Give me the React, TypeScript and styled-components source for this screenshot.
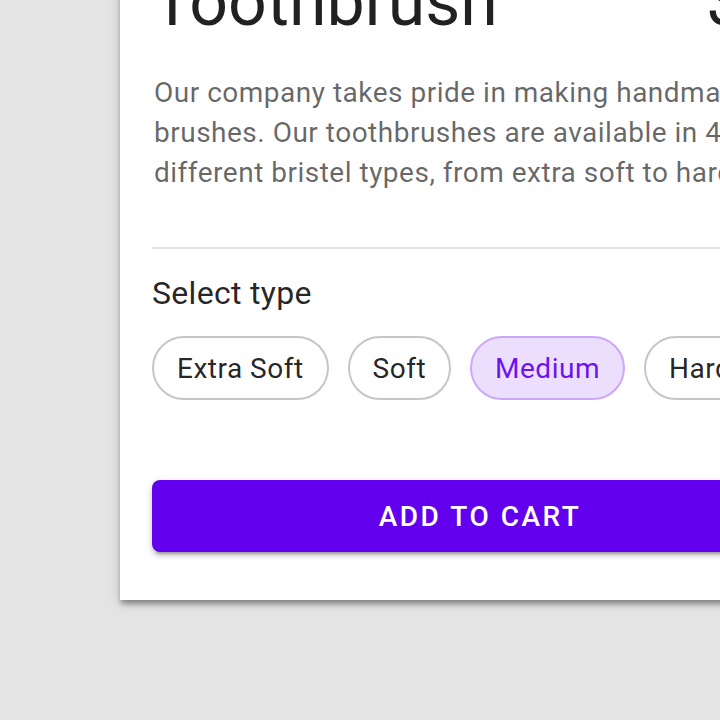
import styled, { createGlobalStyle } from "styled-components";
import { useState } from "react";

const GlobalStyle = createGlobalStyle`
  html, body {
    margin: 0;
    padding: 0;
    background: #e4e4e4;
    overflow: hidden;
    font-family: Roboto, "Liberation Sans", sans-serif;
    -webkit-font-smoothing: antialiased;
  }
`;

const Page = styled.div`
  width: 720px;
  height: 720px;
  padding-left: 120px;
  box-sizing: border-box;
`;

const Card = styled.div`
  width: 720px;
  margin-top: -70px;
  padding: 32px 32px 48px;
  box-sizing: border-box;
  background: #fff;
  box-shadow: 0 6px 6px -2px rgba(0, 0, 0, 0.25), 0 4px 4px rgba(0, 0, 0, 0.14),
    0 2px 12px rgba(0, 0, 0, 0.14);
`;

const TitleRow = styled.div`
  display: flex;
  align-items: baseline;
`;

const Title = styled.h1`
  flex: 1;
  margin: 0;
  font-size: 68px;
  line-height: 80px;
  font-weight: 400;
  color: rgba(0, 0, 0, 0.87);
`;

const Price = styled.span`
  flex: none;
  width: 102px;
  white-space: nowrap;
  font-size: 68px;
  line-height: 80px;
  color: rgba(0, 0, 0, 0.87);
`;

const Description = styled.p`
  margin: 31px 0 0;
  padding-left: 2px;
  font-size: 28px;
  line-height: 40px;
  letter-spacing: 0.5px;
  color: rgba(0, 0, 0, 0.6);
`;

const Divider = styled.hr`
  margin: 54px 0 0;
  border: none;
  height: 2px;
  background: rgba(0, 0, 0, 0.12);
`;

const Label = styled.div`
  margin-top: 20px;
  font-size: 32px;
  line-height: 48px;
  letter-spacing: 0.3px;
  color: rgba(0, 0, 0, 0.87);
`;

const ChipSet = styled.div`
  display: flex;
  gap: 19px;
  margin-top: 19px;
  white-space: nowrap;
`;

const Chip = styled.button<{ $selected?: boolean }>`
  flex: none;
  height: 64px;
  padding: 0 23px;
  border-radius: 32px;
  font-family: inherit;
  font-size: 28px;
  letter-spacing: 0.5px;
  cursor: pointer;
  border: 2px solid ${(p) => (p.$selected ? "#cda8f9" : "#c6c6c6")};
  background: ${(p) => (p.$selected ? "#ebdffd" : "#fff")};
  color: ${(p) => (p.$selected ? "#6f12f0" : "rgba(0, 0, 0, 0.87)")};
`;

const CartButton = styled.button`
  display: block;
  width: 100%;
  height: 72px;
  margin-top: 80px;
  border: none;
  border-radius: 8px;
  background: #6200ee;
  color: #fff;
  font-family: inherit;
  font-size: 28px;
  font-weight: 500;
  letter-spacing: 2.5px;
  text-transform: uppercase;
  cursor: pointer;
  box-shadow: 0 6px 2px -4px rgba(0, 0, 0, 0.2), 0 4px 4px rgba(0, 0, 0, 0.14),
    0 2px 10px rgba(0, 0, 0, 0.12);
`;

const types = ["Extra Soft", "Soft", "Medium", "Hard"];

function App() {
  const [selected, setSelected] = useState("Medium");
  return (
    <Page>
      <GlobalStyle />
      <Card>
        <TitleRow>
          <Title>Toothbrush</Title>
          <Price>$4.99</Price>
        </TitleRow>
        <Description>
          Our company takes pride in making handmade brushes. Our toothbrushes
          are available in 4 different bristel types, from extra soft to hard.
        </Description>
        <Divider />
        <Label>Select type</Label>
        <ChipSet>
          {types.map((t) => (
            <Chip key={t} $selected={t === selected} onClick={() => setSelected(t)}>
              {t}
            </Chip>
          ))}
        </ChipSet>
        <CartButton>Add to cart</CartButton>
      </Card>
    </Page>
  );
}

export default App;
